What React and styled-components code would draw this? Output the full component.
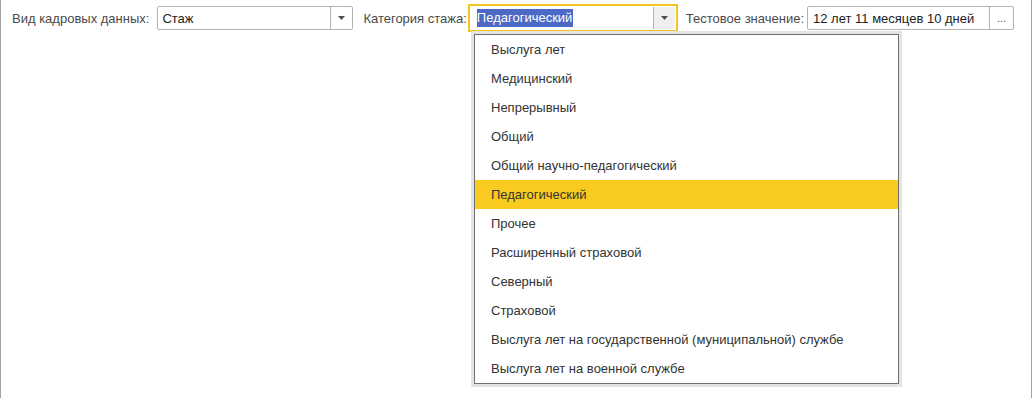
import React from 'react'
import styled, { createGlobalStyle } from 'styled-components'

const GlobalStyle = createGlobalStyle`
  html, body {
    margin: 0;
    padding: 0;
    background: #fff;
  }
  body {
    font-family: "Liberation Sans", Arial, sans-serif;
    font-size: 13px;
    color: #333;
  }
`

const Page = styled.div`
  position: relative;
  height: 398px;
  box-sizing: border-box;
  border-left: 1px solid #a3a3a3;
  border-right: 1px solid #a3a3a3;
  overflow: hidden;
`

const Toolbar = styled.div`
  display: flex;
  align-items: center;
  height: 36px;
  padding-left: 11px;
`

const Group = styled.div`
  display: flex;
  align-items: center;
  margin-right: ${p => p.$gap || 0}px;
`

const Label = styled.span`
  color: #4a4a4a;
  margin-right: ${p => p.$gap ?? 5}px;
  white-space: nowrap;
`

const Field = styled.div`
  display: flex;
  align-items: stretch;
  box-sizing: border-box;
  width: ${p => p.$width}px;
  height: ${p => (p.$focused ? 28 : 24)}px;
  border: ${p => (p.$focused ? '2px solid #f5c51c' : '1px solid #b3b3b3')};
  border-radius: ${p => (p.$focused ? 0 : 2)}px;
  background: #fff;
  padding: ${p => (p.$focused ? '1px' : '0')};
`

const Value = styled.div`
  flex: 1;
  display: flex;
  align-items: center;
  padding-left: ${p => p.$pad || 4}px;
  color: #222;
  white-space: nowrap;
  overflow: hidden;
`

const Selected = styled.span`
  background: #4c69c6;
  color: #fff;
  line-height: 18px;
  padding-right: 1px;
`

const Button = styled.div`
  width: ${p => p.$width || 21}px;
  display: flex;
  align-items: center;
  justify-content: center;
  border-left: 1px solid #b3b3b3;
  background: ${p => (p.$active ? '#efefef' : 'transparent')};
  color: #555;
  font-size: 11px;
`

const Arrow = () => (
  <svg width="7" height="4" viewBox="0 0 7 4">
    <polygon points="0,0 7,0 3.5,4" fill="#4d4d4d" />
  </svg>
)

const List = styled.ul`
  position: absolute;
  left: 473px;
  top: 34px;
  width: 425px;
  margin: 0;
  padding: 0;
  list-style: none;
  box-sizing: border-box;
  border: 1px solid #6f6f6f;
  background: #fff;
  box-shadow: 0 0 0 3px #e4e4e4;
`

const Item = styled.li`
  height: 29px;
  display: flex;
  align-items: center;
  padding-left: 16px;
  color: #333;
  background: ${p => (p.$active ? '#f9cb1f' : 'transparent')};
`

const items = [
  'Выслуга лет',
  'Медицинский',
  'Непрерывный',
  'Общий',
  'Общий научно-педагогический',
  'Педагогический',
  'Прочее',
  'Расширенный страховой',
  'Северный',
  'Страховой',
  'Выслуга лет на государственной (муниципальной) службе',
  'Выслуга лет на военной службе',
]

export default function App() {
  return (
    <>
      <GlobalStyle />
      <Page>
        <Toolbar>
          <Group $gap={10}>
            <Label $gap={8}>Вид кадровых данных:</Label>
            <Field $width={196}>
              <Value>Стаж</Value>
              <Button><Arrow /></Button>
            </Field>
          </Group>
          <Group $gap={8}>
            <Label $gap={1}>Категория стажа:</Label>
            <Field $width={210} $focused>
              <Value $pad={6}><Selected>Педагогический</Selected></Value>
              <Button $active><Arrow /></Button>
            </Field>
          </Group>
          <Group>
            <Label $gap={3}>Тестовое значение:</Label>
            <Field $width={207}>
              <Value $pad={5}>12 лет 11 месяцев 10 дней</Value>
              <Button $width={23}>...</Button>
            </Field>
          </Group>
        </Toolbar>
        <List>
          {items.map(t => (
            <Item key={t} $active={t === 'Педагогический'}>{t}</Item>
          ))}
        </List>
      </Page>
    </>
  )
}
